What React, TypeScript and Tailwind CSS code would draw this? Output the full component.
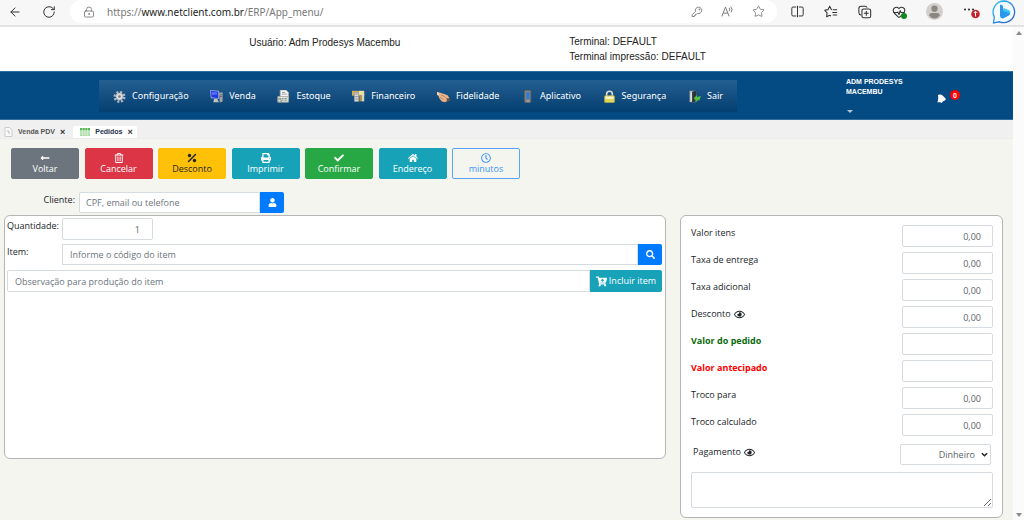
import type { ReactNode } from 'react';
import { ArrowLeft, RotateCw, LockKeyhole, Star, HeartPulse } from 'lucide-react';
import {
  FaLongArrowAltLeft, FaRegTrashAlt, FaPrint, FaCheck, FaHome, FaRegClock,
  FaUser, FaSearch, FaCartPlus, FaRegEye,
} from 'react-icons/fa';

const field =
  'min-w-0 border border-[#d6dbe0] bg-white text-[9px] leading-4 text-[#5b636a] placeholder:text-[#6c757d] outline-none';

function Gear() {
  return (
    <svg viewBox="0 0 16 16" className="size-[13px]">
      <circle cx="8" cy="8.500" r="5.600" fill="none" stroke="#b4b7bc" strokeWidth="3.600" strokeDasharray="2.400 2" />
      <circle cx="8" cy="8" r="4.200" fill="#dcdee0" stroke="#b9bcc1" />
      <circle cx="8" cy="8" r="1.600" fill="#6b7785" />
    </svg>
  );
}

function Computer() {
  return (
    <svg viewBox="0 0 16 16" className="size-[13px]">
      <path d="M11 3h4.500v11l-3.500 1.500z" fill="#a2a4a4" />
      <path d="M0 0l11 1v10L1 10z" fill="#93a3e8" />
      <path d="M1 1l9 1v8L2 9z" fill="#2239dd" />
      <path d="M2 2l7 1v2.500L2 6z" fill="#4f6ef5" />
      <path d="M5 11h4l2 4H4z" fill="#c3c3bd" />
      <path d="M12 6h3M12 8h3" stroke="#5c5f62" />
    </svg>
  );
}

function Stock() {
  return (
    <svg viewBox="0 0 16 16" className="size-[13px]">
      <path d="M4 0h7l3 3v9H4z" fill="#f2f2ee" stroke="#b4b4b0" />
      <path d="M6 3h4M6 5h6" stroke="#8f9499" />
      <path d="M1 8h13v7H1z" fill="#dfe3dd" stroke="#a6aaa5" />
      <path d="M3 10h2v1H3zM6 10h2v1H6zM9 10h3v1H9zM3 12h2v1H3zM6 12h2v1H6zM9 12h3v1H9z" fill="#68806b" />
      <circle cx="3" cy="13" r="2.400" fill="#c9cfcb" stroke="#7c8580" />
    </svg>
  );
}

function Finance() {
  return (
    <svg viewBox="0 0 16 16" className="size-[13px]">
      <path d="M0 1h8v6H0z" fill="#d8b04e" />
      <path d="M8 1h7v6H8z" fill="#f1dfa0" />
      <path d="M3 3h5v11H3z" fill="#d9dcdf" stroke="#9a9ea3" />
      <path d="M9 6h3v8H9z" fill="#ba8f42" />
      <path d="M12 4h3v10h-3z" fill="#dcd6c4" />
      <path d="M4 5h3M4 8h3M4 11h3" stroke="#777d84" />
    </svg>
  );
}

function Hands() {
  return (
    <svg viewBox="0 0 16 16" className="size-[13px]">
      <path d="M0 2.500l4 1 4 1 5 2 2 3-1 3-4 2.500-4-1-3-3.500z" fill="#e5b48b" />
      <path d="M5 6l4 2 3 3M4 9l4 3" stroke="#b57c54" fill="none" />
      <path d="M12 10l4 0v3l-4 2z" fill="#6b5145" />
      <path d="M0 2l3 2-1 3-2-1z" fill="#f3d3b2" />
    </svg>
  );
}

function Phone() {
  return (
    <svg viewBox="0 0 16 16" className="size-[13px]">
      <rect x="4.500" y="0.500" width="7.500" height="15" rx="1" fill="#8a827b" stroke="#6a6563" />
      <rect x="6.500" y="2.500" width="4" height="9" fill="#2f7fd0" />
      <path d="M7 13.500h3" stroke="#cfcfcf" />
    </svg>
  );
}

function Padlock() {
  return (
    <svg viewBox="0 0 16 16" className="size-[13px]">
      <path d="M4.500 8V5a3.500 3.500 0 0 1 7 0v3" fill="none" stroke="#dcdcd8" strokeWidth="2" />
      <rect x="2" y="7" width="12" height="8.500" rx="1" fill="#e0d65a" stroke="#b3ab52" />
      <path d="M3 8h10v3H3z" fill="#f7f5cc" />
    </svg>
  );
}

function Exit() {
  return (
    <svg viewBox="0 0 16 16" className="size-[13px]">
      <path d="M2 1h8v14H2z" fill="#b3b5b6" />
      <path d="M5 2l5-1v13l-5 1z" fill="#2e3336" />
      <path d="M3 3h2v11H3z" fill="#dcdcdc" />
      <path d="M7 10l4-4v2.500l5-1-2 5-3 .5v2z" fill="#4fc043" />
    </svg>
  );
}

function Percent() {
  return (
    <svg viewBox="0 0 16 16">
      <path d="M2.500 13.500l11-11" stroke="currentColor" strokeWidth="2.400" strokeLinecap="round" />
      <circle cx="4" cy="4" r="2.700" fill="currentColor" />
      <circle cx="12" cy="12" r="2.700" fill="currentColor" />
    </svg>
  );
}

const menu: [string, ReactNode][] = [
  ['Configuração', <Gear />],
  ['Venda', <Computer />],
  ['Estoque', <Stock />],
  ['Financeiro', <Finance />],
  ['Fidelidade', <Hands />],
  ['Aplicativo', <Phone />],
  ['Segurança', <Padlock />],
  ['Sair', <Exit />],
];

const actions: [string, ReactNode, string][] = [
  ['Voltar', <FaLongArrowAltLeft />, 'bg-[#6c757d] border-[#6c757d] text-white'],
  ['Cancelar', <FaRegTrashAlt />, 'bg-[#dc3545] border-[#dc3545] text-white'],
  ['Desconto', <Percent />, 'bg-[#ffc107] border-[#ffc107] text-[#212529]'],
  ['Imprimir', <FaPrint />, 'bg-[#17a2b8] border-[#17a2b8] text-white'],
  ['Confirmar', <FaCheck />, 'bg-[#28a745] border-[#28a745] text-white'],
  ['Endereço', <FaHome />, 'bg-[#17a2b8] border-[#17a2b8] text-white'],
  ['minutos', <FaRegClock />, 'bg-transparent border-[#5aa5fb] text-[#3d94fb]'],
];

const totals: { id: string; label: string; value: string; eye?: boolean; tone?: string }[] = [
  { id: 'itens', label: 'Valor itens', value: '0,00' },
  { id: 'entrega', label: 'Taxa de entrega', value: '0,00' },
  { id: 'adicional', label: 'Taxa adicional', value: '0,00' },
  { id: 'desconto', label: 'Desconto', value: '0,00', eye: true },
  { id: 'pedido', label: 'Valor do pedido', value: '', tone: 'font-bold text-[#0b6b0b]' },
  { id: 'antecipado', label: 'Valor antecipado', value: '', tone: 'font-bold text-[#f00]' },
  { id: 'troco', label: 'Troco para', value: '0,00' },
  { id: 'calculado', label: 'Troco calculado', value: '0,00' },
];

function BrowserBar() {
  return (
    <header className="flex h-[27px] shrink-0 items-center border-b-2 border-[#e3e3e3] bg-[#f7f7f7] pb-[2px] pr-2 pl-2 text-[#333]">
      <button aria-label="Voltar página" className="mr-5"><ArrowLeft className="size-[14px]" strokeWidth={1.7} /></button>
      <button aria-label="Atualizar" className="mr-[14px]"><RotateCw className="size-[14px]" strokeWidth={1.7} /></button>
      <div className="flex h-[23px] min-w-0 flex-1 items-center rounded-full bg-white pr-3 pl-[13px] text-[#777]">
        <LockKeyhole className="mr-3 size-3 shrink-0" strokeWidth={1.7} />
        <span className="flex-1 truncate text-[10px] leading-4 text-[#777]">
          https://<span className="text-[#1c1c1c]">www.netclient.com.br</span>/ERP/App_menu/
        </span>
        <button aria-label="Senhas" className="mr-[18px]">
          <svg viewBox="0 0 16 16" className="size-3" fill="none" stroke="currentColor" strokeWidth="1.200">
            <path d="M10 1.500a4.300 4.300 0 0 0-4 5.700L1.500 11.700V14h3v-1.500H6V11h1.500l1.200-1.100A4.300 4.300 0 1 0 10 1.500z" />
            <circle cx="11.300" cy="4.700" r=".7" />
          </svg>
        </button>
        <button aria-label="Ler em voz alta" className="mr-[18px]">
          <svg viewBox="0 0 16 16" className="size-[13px]" fill="none" stroke="currentColor" strokeWidth="1.200">
            <path d="M1 14L5.500 2.500 10 14M2.700 10h5.700M10 3.500q1.500 1.500 0 4M12 2q3 3 .5 7" />
          </svg>
        </button>
        <button aria-label="Favoritar"><Star className="size-[13px]" strokeWidth={1.6} /></button>
      </div>
      <nav aria-label="Navegador" className="ml-[14px] flex items-center gap-5">
        <button aria-label="Dividir tela">
          <svg viewBox="0 0 16 16" className="size-[13px]" fill="none" stroke="currentColor" strokeWidth="1.200">
            <path d="M6.500 2.500h-4q-1.500 0-1.500 1.500v8q0 1.500 1.500 1.500h4M9.500 2.500h4q1.500 0 1.500 1.500v8q0 1.500-1.500 1.500h-4M8 1v14" />
          </svg>
        </button>
        <button aria-label="Favoritos">
          <svg viewBox="0 0 16 16" className="size-[14px]" fill="none" stroke="currentColor" strokeWidth="1.200" strokeLinejoin="round">
            <path d="M9 5.500L8.500 5.300 6.500 1.500 4.500 5.300.8 6l2.700 3-.5 4.500 3.500-1.800 1.500.8M10 5.500h5M9.500 8.500H15M10 11.500h5" />
          </svg>
        </button>
        <button aria-label="Coleções">
          <svg viewBox="0 0 16 16" className="size-[14px]" fill="none" stroke="currentColor" strokeWidth="1.200">
            <path d="M3.500 11.500Q1 11 1 8.500V4q0-2.500 2.500-2.500H8q2 0 2.500 1.500M6.500 4.500h6q2 0 2 2v6q0 2-2 2h-6q-2 0-2-2v-6q0-2 2-2zM9.500 6.800v5.400M6.800 9.500h5.400" />
          </svg>
        </button>
        <button aria-label="Desempenho" className="relative">
          <HeartPulse className="size-[14px]" strokeWidth={1.8} />
          <span className="absolute -right-px bottom-0 size-[6px] rounded-full bg-[#128a1c]" />
        </button>
        <button aria-label="Perfil">
          <svg viewBox="0 0 18 18" className="size-[17px]">
            <circle cx="9" cy="9" r="9" fill="#d2cfcc" />
            <circle cx="9" cy="6" r="3.300" fill="#8b8681" />
            <path d="M3.500 13q0-2.500 3-2.500h5q3 0 3 2.500-2 3.500-5.500 3.500T3.500 13z" fill="#8b8681" />
          </svg>
        </button>
        <button aria-label="Mais opções">
          <svg viewBox="0 0 17 14" className="h-[14px] w-[17px]">
            <circle cx="2" cy="4.500" r="1" fill="#222" /><circle cx="6" cy="4.500" r="1" fill="#222" /><circle cx="10" cy="4.500" r="1" fill="#222" />
            <circle cx="12.500" cy="9" r="4.300" fill="#c4242b" />
            <path d="M12.500 11.500v-5M10.800 8l1.700-1.700L14.200 8" stroke="#fff" fill="none" />
          </svg>
        </button>
      </nav>
      <button aria-label="Bing" className="ml-3">
        <svg viewBox="0 0 24 24" className="size-6">
          <defs>
            <linearGradient id="bing" x1="0" y1="0" x2="1" y2="1"><stop stopColor="#35c3f3" /><stop offset="1" stopColor="#2457c9" /></linearGradient>
          </defs>
          <path d="M12 1a11 10.800 0 1 1-4.500 20.800L1.500 23 2.300 17A11 11 0 0 1 12 1z" fill="#f2fbff" stroke="url(#bing)" strokeWidth="1.300" />
          <path d="M8 4.500l3 1.300v5.200l.8-2.700 5.200 2.300q1.500.9 1.200 2.800-.3 1.300-1.500 2L11.200 18.500q-3.200 0-3.200-3z" fill="#2a97ec" />
          <path d="M11 11l.8-2.700 5.200 2.300q1.500.9 1.200 2.800z" fill="#3cc8f0" />
        </svg>
      </button>
    </header>
  );
}

export default function App() {
  return (
    <div className="flex min-h-screen flex-col bg-white font-['Noto_Sans','Open_Sans',sans-serif] text-[9px] leading-4 text-[#212529]">
      <BrowserBar />
      <div className="flex flex-1">
        <div className="flex min-w-0 flex-1 flex-col bg-[#f4f5ee]">
          <section className="flex h-11 bg-white pt-[7px] font-['Liberation_Sans',Arial,sans-serif] text-[10px] leading-[15px] text-[#222]">
            <p className="w-[56.2%] pt-px pl-[24.6%]">Usuário: Adm Prodesys Macembu</p>
            <p>Terminal: DEFAULT<br />Terminal impressão: DEFAULT</p>
          </section>

          <section className="flex h-[49px] border-y border-[#2f6e9e] bg-[#044b83] pl-[99px] text-white">
            <nav aria-label="Principal" className="mt-2 flex h-8 w-[638px] items-center justify-between bg-linear-to-b from-[#245f92] to-[#033f70] px-[14px]">
              {menu.map(([label, icon]) => (
                <a key={label} href="#" className="flex items-center gap-[6px]">{icon}{label}</a>
              ))}
            </nav>
            <button className="ml-[109px] flex w-[70px] flex-col items-start pt-[5px] text-left font-['Liberation_Sans',Arial,sans-serif] text-[7px] leading-[10px] font-bold">
              ADM PRODESYS MACEMBU
              <span className="mt-[13px] ml-px border-x-3 border-t-3 border-x-transparent border-t-[#b8c4ce]" />
            </button>
            <button aria-label="Notificações" className="ml-[21px] flex items-start gap-1 pt-[18px]">
              <svg viewBox="0 0 10 10" className="mt-1 size-[9px]" fill="#fff">
                <path d="M1 1Q4-.5 6.500 2l3.500 3.500Q9 7.500 6.500 8.200L5 10 3.500 9.200.5 9.200Q2 5 1 1z" />
              </svg>
              <span className="grid size-[10px] place-items-center rounded-full bg-[#f00] font-['Liberation_Sans'] text-[7px] leading-none font-bold">0</span>
            </button>
          </section>

          <div role="tablist" className="flex h-[19px] items-end border-b border-[#ececec] bg-[#f0f0f0] font-['Liberation_Sans',Arial,sans-serif] text-[7px] font-bold">
            <div className="flex h-3 items-center gap-[5px] pr-1 pl-1 text-[#555]">
              <svg viewBox="0 0 9 10" className="h-[10px] w-[9px]"><path d="M1 .5h4.500L8 3v6.500H1z" fill="#fafafa" stroke="#ccc" /><path d="M3 4h2v3" fill="none" stroke="#bbb" /></svg>
              <button role="tab" aria-selected="false">Venda PDV</button>
              <button aria-label="Fechar Venda PDV" className="text-[9px] leading-3 text-[#333]">×</button>
            </div>
            <div className="ml-1 flex h-3 items-center gap-[5px] rounded-t-xs bg-white pr-1 pl-[7px] text-[#26324a]">
              <svg viewBox="0 0 10 8" className="h-2 w-[10px]"><path d="M0 0h10v8H0z" fill="#a9dca6" /><path d="M0 0h10v2H0z" fill="#58b858" /><path d="M0 4h10M0 6h10M2.500 0v8M5 0v8M7.500 0v8" stroke="#e8f7e7" strokeWidth=".5" /></svg>
              <button role="tab" aria-selected="true">Pedidos</button>
              <button aria-label="Fechar Pedidos" className="text-[9px] leading-3 text-[#333]">×</button>
            </div>
          </div>

          <main className="flex flex-1 flex-col pt-[9px] pr-[10px] pb-[2px] pl-1 font-['Open_Sans','Noto_Sans',sans-serif]">
            <div className="ml-[7px] flex w-[509px] justify-between">
              {actions.map(([label, icon, tone]) => (
                <button key={label} className={`flex h-[31px] w-[68px] flex-col items-center justify-center rounded-xs border leading-3 [&>svg]:size-[10px] ${tone}`}>
                  {icon}
                  <span>{label}</span>
                </button>
              ))}
            </div>

            <div className="mt-[13px] mb-[2px] flex">
              <label htmlFor="cliente" className="w-[75px] pr-1 text-right">Cliente:</label>
              <input id="cliente" placeholder="CPF, email ou telefone" className={`${field} h-[21px] w-[181px] rounded-l-xs px-[6px]`} />
              <button aria-label="Buscar cliente" className="grid h-[21px] w-6 place-items-center rounded-r-xs bg-[#007bff] text-white"><FaUser className="size-[9px]" /></button>
            </div>

            <div className="grid flex-1 grid-cols-[662fr_323fr] items-start gap-[14px]">
              <section className="flex h-[244px] min-w-0 flex-col rounded-md border border-[#b5b5b5] bg-white pt-[2px] pr-[3px] pl-[2px]">
                <div className="flex">
                  <label htmlFor="qtd" className="w-[55px] shrink-0">Quantidade:</label>
                  <input id="qtd" defaultValue="1" className={`${field} h-[22px] w-[91px] rounded-xs pr-3 text-right`} />
                </div>
                <div className="mt-1 flex">
                  <label htmlFor="item" className="w-[55px] shrink-0">Item:</label>
                  <input id="item" placeholder="Informe o código do item" className={`${field} h-[21px] flex-1 px-[7px]`} />
                  <button aria-label="Buscar item" className="grid h-[21px] w-6 place-items-center rounded-r-xs bg-[#007bff] text-white"><FaSearch className="size-[9px]" /></button>
                </div>
                <div className="mt-[5px] flex">
                  <input aria-label="Observação" placeholder="Observação para produção do item" className={`${field} h-[22px] flex-1 rounded-l-xs px-[7px]`} />
                  <button className="flex h-[22px] w-[72px] items-center justify-center gap-[2px] rounded-r-xs bg-[#17a2b8] text-white"><FaCartPlus className="size-[11px]" />Incluir item</button>
                </div>
              </section>

              <section className="flex min-w-0 flex-col rounded-md border border-[#b5b5b5] bg-white pt-[9px] pr-[9px] pb-[9px] pl-[10px]">
                {totals.map((t) => (
                  <div key={t.id} className="mb-[5px] flex items-start justify-between">
                    <label htmlFor={t.id} className={`flex items-center gap-[3px] ${t.tone ?? ''}`}>
                      {t.label}{t.eye && <FaRegEye className="size-[11px]" />}
                    </label>
                    <input id={t.id} defaultValue={t.value} className={`${field} h-[22px] w-[91px] rounded-xs pr-[11px] text-right`} />
                  </div>
                ))}
                <div className="mt-[3px] flex items-start justify-between px-[2px]">
                  <label htmlFor="pagamento" className="flex items-center gap-[3px]">Pagamento <FaRegEye className="size-[11px]" /></label>
                  <div className="relative">
                    <select id="pagamento" className={`${field} h-[21px] w-[91px] appearance-none rounded-xs pr-[15px] text-right [text-align-last:right]`}>
                      <option>Dinheiro</option>
                    </select>
                    <svg viewBox="0 0 8 5" className="pointer-events-none absolute top-2 right-[3px] h-[5px] w-[7px]"><path d="M1 1l3 3 3-3" fill="none" stroke="#222" strokeWidth="1.700" /></svg>
                  </div>
                </div>
                <textarea aria-label="Observações do pagamento" className={`${field} mt-[7px] h-[36px] w-full resize rounded-xs`} />
              </section>
            </div>
          </main>
        </div>

        <div aria-hidden="true" className="flex w-[11px] flex-col items-center justify-between bg-[#fbfbfb] pt-1 pb-[3px]">
          <span className="border-x-3 border-b-4 border-x-transparent border-b-[#8a8a8a]" />
          <span className="border-x-3 border-t-4 border-x-transparent border-t-[#8a8a8a]" />
        </div>
      </div>
    </div>
  );
}
